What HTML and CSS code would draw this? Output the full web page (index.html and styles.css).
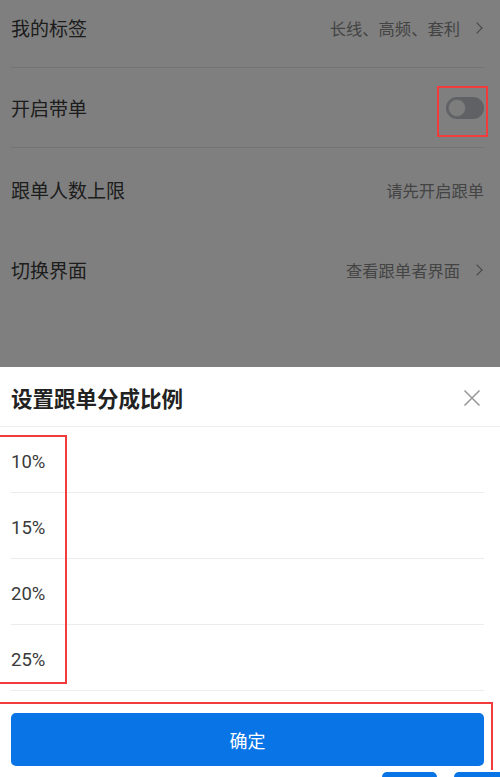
FILE: index.html
```html
<!DOCTYPE html>
<html lang="zh-CN">
<head>
    <meta charset="UTF-8">
    <meta name="viewport" content="width=device-width, initial-scale=1.0">
    <title>设置跟单分成比例</title>
    <link rel="stylesheet" href="styles.css">
</head>
<body>
    <ul class="settings">
        <li class="row">
            <span class="label">我的标签</span>
            <span class="value">长线、高频、套利<i class="chevron"></i></span>
        </li>
        <li class="row">
            <span class="label">开启带单</span>
            <span class="switch"><span class="knob"></span></span>
        </li>
        <li class="row row-plain">
            <span class="label">跟单人数上限</span>
            <span class="value">请先开启跟单</span>
        </li>
        <li class="row row-plain">
            <span class="label">切换界面</span>
            <span class="value">查看跟单者界面<i class="chevron"></i></span>
        </li>
    </ul>

    <div class="mask"></div>

    <div class="sheet">
        <div class="sheet-head">
            <h2>设置跟单分成比例</h2>
            <svg class="close" width="18" height="18" viewBox="0 0 18 18">
                <path d="M1.5 1.5 L16.5 16.5 M16.5 1.5 L1.5 16.5" stroke="#9a9a9a" stroke-width="1.6" fill="none"/>
            </svg>
        </div>
        <ul class="options">
            <li>10%</li>
            <li>15%</li>
            <li>20%</li>
            <li>25%</li>
        </ul>
        <button class="confirm" type="button">确定</button>
        <div class="peek">
            <span></span>
            <span></span>
        </div>
    </div>

    <!-- annotation boxes drawn on the screenshot -->
    <div class="mark mark-switch"></div>
    <div class="mark mark-options"></div>
    <div class="mark mark-button"></div>
</body>
</html>
```

FILE: styles.css
```css
body {
    margin: 0;
    width: 500px;
    height: 777px;
    overflow: hidden;
    position: relative;
    background: #fff;
    font-family: "Noto Sans CJK SC", "Noto Sans", sans-serif;
    color: #333;
}
ul {
    list-style-type: none;
    margin: 0;
    padding: 0;
}
.settings {
    margin: -12px 16px 0 11px;
}
.row {
    display: flex;
    justify-content: space-between;
    align-items: center;
    height: 80px;
    box-sizing: border-box;
    border-bottom: 1px solid #e6e6e6;
}
.row-plain {
    border-bottom: none;
    padding-top: 4px;
}
.label {
    font-size: 19px;
    line-height: 24px;
    color: #3a3a3a;
}
.value {
    display: flex;
    align-items: center;
    font-size: 16.3px;
    line-height: 22px;
    color: #888;
}
.chevron {
    display: inline-block;
    width: 7px;
    height: 7px;
    margin-left: 13px;
    margin-right: 3px;
    border-top: 1.5px solid #888;
    border-right: 1.5px solid #888;
    transform: rotate(45deg);
}
.switch {
    display: flex;
    align-items: center;
    width: 38px;
    height: 22px;
    box-sizing: border-box;
    padding: 0 2px;
    border-radius: 11px;
    background: #bfc2ca;
}
.knob {
    width: 18px;
    height: 18px;
    box-sizing: border-box;
    border-radius: 50%;
    background: #fbfbfb;
    border: 1px solid #d0d2d8;
}
.mask {
    position: absolute;
    inset: 0;
    background: rgba(0, 0, 0, 0.5);
}
.sheet {
    position: absolute;
    left: 0;
    right: 0;
    top: 367px;
    bottom: 0;
    background: #fff;
    overflow: hidden;
}
.sheet-head {
    display: flex;
    justify-content: space-between;
    align-items: center;
    height: 60px;
    box-sizing: border-box;
    padding: 2px 19px 0 11px;
    border-bottom: 1px solid #ececec;
}
.sheet-head h2 {
    margin: 0;
    font-size: 21.5px;
    line-height: 28px;
    font-weight: bold;
    color: #222;
}
.options {
    margin: 0 16px 0 11px;
}
.options li {
    display: flex;
    align-items: center;
    height: 66px;
    box-sizing: border-box;
    padding-top: 4px;
    border-bottom: 1px solid #ececec;
    font-family: Roboto, "Noto Sans CJK SC", sans-serif;
    font-size: 18.5px;
    color: #3a3a3a;
}
.confirm {
    display: block;
    width: 473px;
    height: 53px;
    margin: 22px 0 0 11px;
    border: none;
    border-radius: 5px;
    background: #0874e6;
    color: #fff;
    font-family: inherit;
    font-size: 18px;
}
.peek {
    display: flex;
    gap: 17px;
    margin: 6px 0 0 382px;
}
.peek span {
    flex-shrink: 0;
    width: 55px;
    height: 20px;
    border-radius: 5px;
    background: #0874e6;
}
.peek span + span {
    width: 60px;
}
.mark {
    position: absolute;
    border: 2px solid #f23b3b;
}
.mark-switch {
    left: 437px;
    top: 86px;
    width: 47px;
    height: 47px;
}
.mark-options {
    left: -2px;
    top: 435px;
    width: 65px;
    height: 245px;
}
.mark-button {
    left: -2px;
    top: 702px;
    width: 491px;
    height: 66px;
    border-bottom: none;
}
```
